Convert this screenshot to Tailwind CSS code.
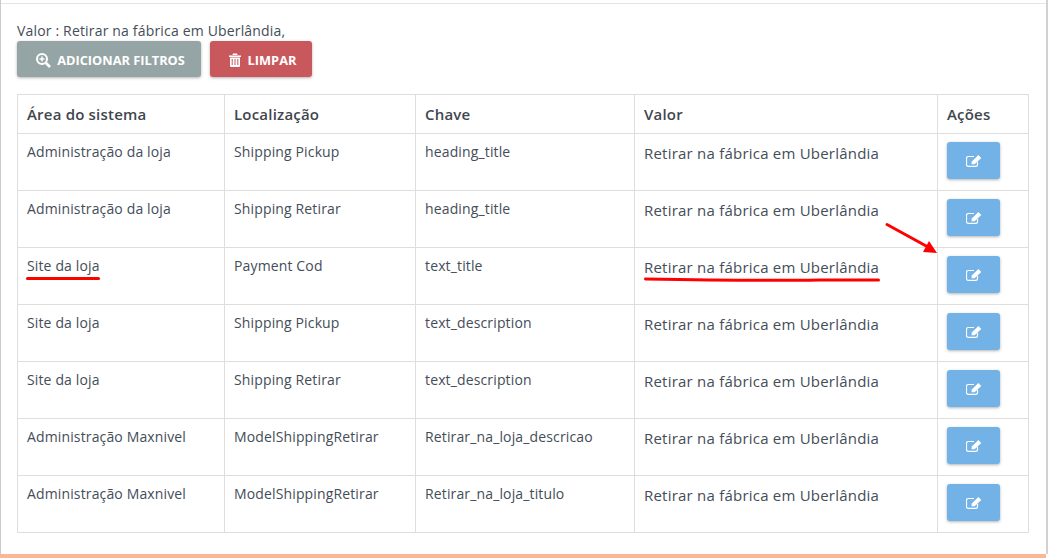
<!DOCTYPE html>
<html lang="pt-BR">
<head>
    <meta charset="UTF-8">
    <title>Traduções</title>
    <script src="https://cdn.jsdelivr.net/npm/@tailwindcss/browser@4"></script>
</head>
<body class="bg-white font-['Open_Sans',sans-serif] text-[#444d58] overflow-hidden">
    <div class="relative w-[1048px] h-[558px] overflow-hidden">
        <div class="h-[554px] border-l border-r-2 border-l-[#c8ccd0] border-r-[#d2d2d6] pt-[3px]">
            <div class="border-t border-[#e4e4e4] pl-[16px]">
                <p class="text-[14px] tracking-[0.17px] leading-5 pt-[17px] h-[37px] whitespace-nowrap">Valor : Retirar na fábrica em Uberlândia,</p>
                <div class="flex gap-[9px] h-[36px]">
                    <button class="flex items-center justify-center gap-[6px] w-[184px] h-[36px] pl-[2px] rounded-[3px] bg-[#95a5a6] text-white text-[12.8px] font-bold shadow-[0_1px_3px_rgba(0,0,0,0.3)]">
                        <svg class="mt-[2px]" width="16" height="16" viewBox="0 0 16 16" fill="none" stroke="white"><circle cx="7" cy="7" r="5" stroke-width="2"/><path d="M11 11l4 4" stroke-width="2.6"/><path d="M4.5 7h5M7 4.5v5" stroke-width="1.5"/></svg>
                        <span class="pt-[4px]">ADICIONAR FILTROS</span>
                    </button>
                    <button class="flex items-center justify-center gap-[7px] w-[102px] h-[36px] pl-[3px] rounded-[3px] bg-[#c9585d] text-white text-[12.8px] font-bold shadow-[0_1px_3px_rgba(0,0,0,0.3)]">
                        <svg class="mt-[2px]" width="12" height="14" viewBox="0 0 12 14" fill="white"><path d="M0 2.5h12V4H0zM4 .5h4l.6 1.5H3.4zM1 4.5h10v8.2c0 .7-.5 1.3-1.2 1.3H2.2C1.5 14 1 13.4 1 12.7z"/><path d="M3.2 6v6M6 6v6M8.8 6v6" stroke="#c9585d" stroke-width="1"/></svg>
                        <span class="pt-[4px]">LIMPAR</span>
                    </button>
                </div>
                <table class="mt-[17px] w-[1011px] table-fixed border-collapse text-[14px] tracking-[0.14px]">
                    <colgroup>
                        <col class="w-[207px]"><col class="w-[191px]"><col class="w-[219px]"><col class="w-[303px]"><col class="w-[91px]">
                    </colgroup>
                    <thead>
                        <tr class="h-[39px] text-left text-[15px] tracking-[0.2px] text-[#3f464e]">
                            <th class="border border-[#dedede] px-[9px] font-semibold">Área do sistema</th>
                            <th class="border border-[#dedede] px-[9px] font-semibold">Localização</th>
                            <th class="border border-[#dedede] px-[9px] font-semibold">Chave</th>
                            <th class="border border-[#dedede] px-[9px] font-semibold">Valor</th>
                            <th class="border border-[#dedede] px-[9px] font-semibold">Ações</th>
                        </tr>
                    </thead>
                    <tbody id="linhas"></tbody>
                </table>
            </div>
        </div>
        <div class="h-[4px] mr-[2px] bg-[#f9b797]"></div>
        <!-- marcas vermelhas por cima da tabela -->
        <svg class="absolute left-0 top-0 pointer-events-none" width="1048" height="558" fill="none">
            <path d="M27.5 278.5H98.5" stroke="#f00" stroke-width="3" stroke-linecap="round"/>
            <path d="M645.5 279C700 280 760 281 820 280H878.5" stroke="#f00" stroke-width="3" stroke-linecap="round"/>
            <path d="M887 224.5L928 247" stroke="#f00" stroke-width="3" stroke-linecap="round"/>
            <path d="M937 253L923 252L929 241Z" fill="#f00"/>
        </svg>
    </div>

    <script>
        const linhas = [
            ['Administração da loja', 'Shipping Pickup', 'heading_title'],
            ['Administração da loja', 'Shipping Retirar', 'heading_title'],
            ['Site da loja', 'Payment Cod', 'text_title'],
            ['Site da loja', 'Shipping Pickup', 'text_description'],
            ['Site da loja', 'Shipping Retirar', 'text_description'],
            ['Administração Maxnivel', 'ModelShippingRetirar', 'Retirar_na_loja_descricao'],
            ['Administração Maxnivel', 'ModelShippingRetirar', 'Retirar_na_loja_titulo']
        ];

        document.getElementById('linhas').innerHTML = linhas.map(l => `
            <tr class="h-[57px] align-top">
                <td class="border border-[#dedede] px-[9px] pt-[7px] whitespace-nowrap">${l[0]}</td>
                <td class="border border-[#dedede] px-[9px] pt-[7px] whitespace-nowrap">${l[1]}</td>
                <td class="border border-[#dedede] px-[9px] pt-[7px] whitespace-nowrap">${l[2]}</td>
                <td class="border border-[#dedede] px-[9px] pt-[8px] text-[15px] tracking-[0.22px] whitespace-nowrap">Retirar na fábrica em Uberlândia</td>
                <td class="border border-[#dedede] px-[9px] pt-[8px]">
                    <button class="flex items-center justify-center w-[53px] h-[37px] pl-[1px] rounded-[3px] bg-[#72b2e6] shadow-[0_1px_3px_rgba(0,0,0,0.3)]">
                        <svg width="16" height="14" viewBox="0 0 16 14" fill="none"><path d="M11.5 8v2.7c0 1-.8 1.7-1.7 1.7H2.2C1.2 12.4.5 11.7.5 10.7V4.2C.5 3.2 1.2 2.5 2.2 2.5H8" stroke="white" stroke-width="1.2"/><path d="M5.5 10.3L5.8 7.6 12.4 1l2.9 2.9-6.7 6.4z" fill="white"/></svg>
                    </button>
                </td>
            </tr>
        `).join('');
    </script>
</body>
</html>
